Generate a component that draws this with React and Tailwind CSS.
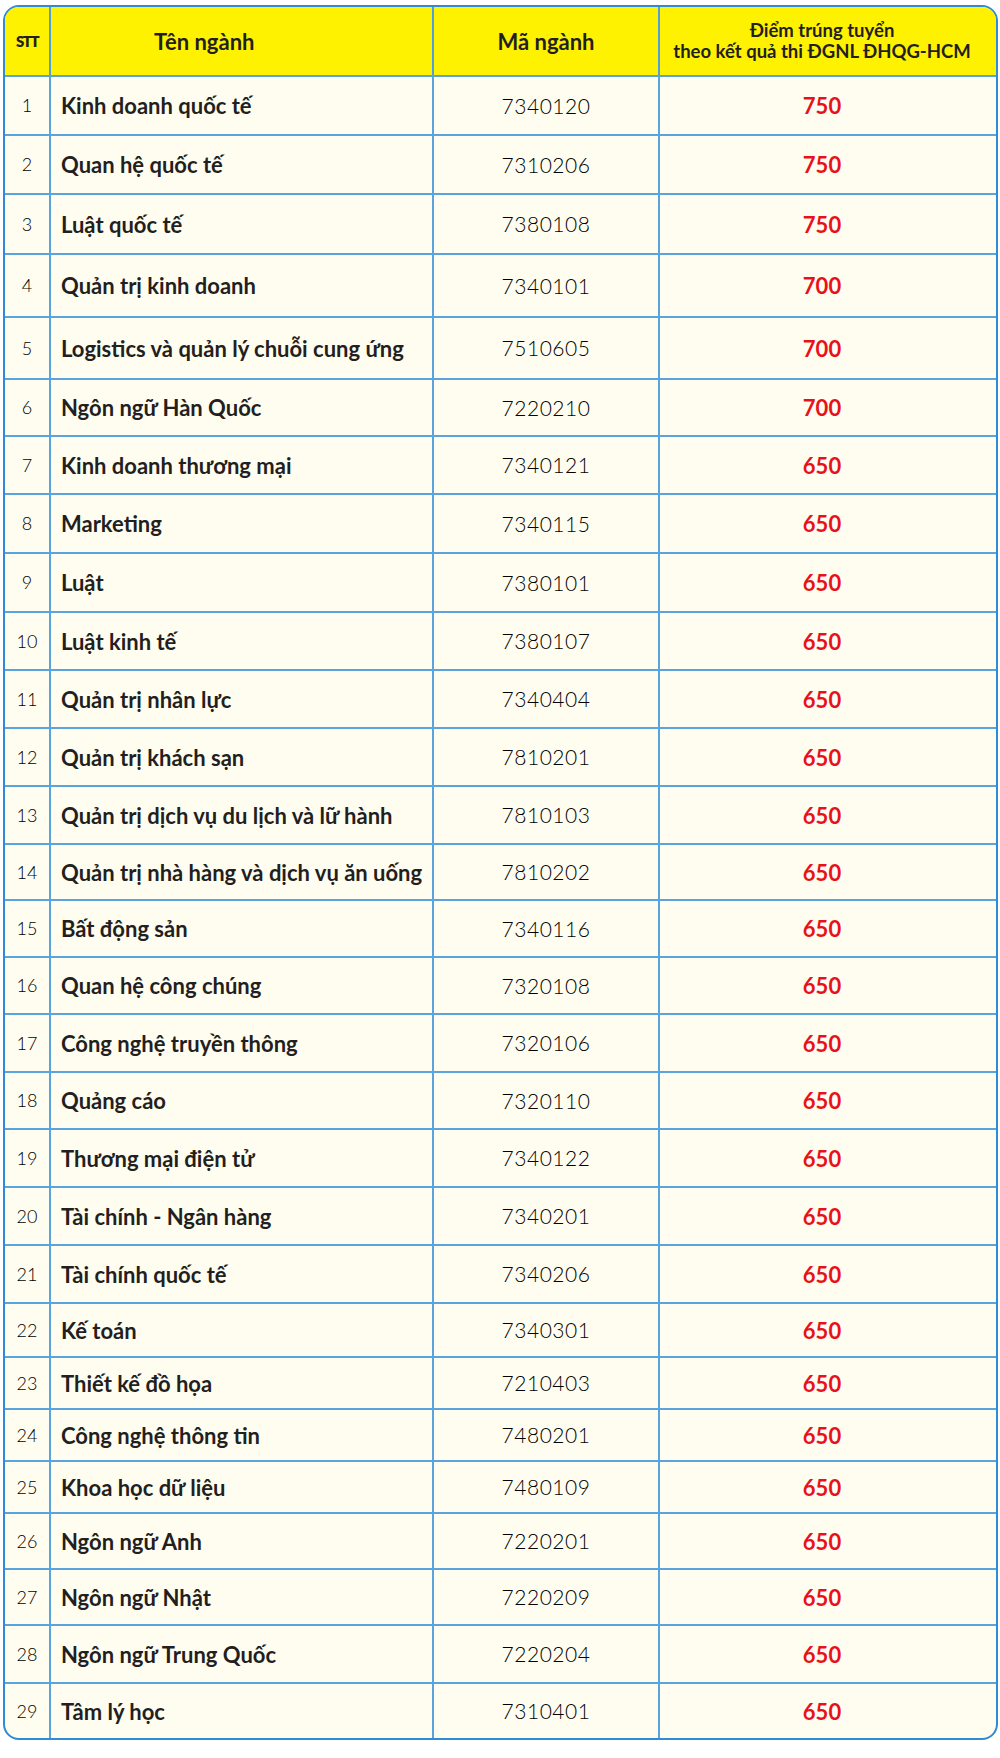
import React from "react";

const rows = [
  [1, "Kinh doanh quốc tế", "7340120", "750", "h-[59px]"],
  [2, "Quan hệ quốc tế", "7310206", "750", "h-[59px]"],
  [3, "Luật quốc tế", "7380108", "750", "h-[60px]"],
  [4, "Quản trị kinh doanh", "7340101", "700", "h-[63px]"],
  [5, "Logistics và quản lý chuỗi cung ứng", "7510605", "700", "h-[62px]"],
  [6, "Ngôn ngữ Hàn Quốc", "7220210", "700", "h-[57px]"],
  [7, "Kinh doanh thương mại", "7340121", "650", "h-[58px]"],
  [8, "Marketing", "7340115", "650", "h-[59px]"],
  [9, "Luật", "7380101", "650", "h-[59px]"],
  [10, "Luật kinh tế", "7380107", "650", "h-[58px]"],
  [11, "Quản trị nhân lực", "7340404", "650", "h-[58px]"],
  [12, "Quản trị khách sạn", "7810201", "650", "h-[58px]"],
  [13, "Quản trị dịch vụ du lịch và lữ hành", "7810103", "650", "h-[58px]"],
  [14, "Quản trị nhà hàng và dịch vụ ăn uống", "7810202", "650", "h-[56px]"],
  [15, "Bất động sản", "7340116", "650", "h-[57px]"],
  [16, "Quan hệ công chúng", "7320108", "650", "h-[57px]"],
  [17, "Công nghệ truyền thông", "7320106", "650", "h-[58px]"],
  [18, "Quảng cáo", "7320110", "650", "h-[57px]"],
  [19, "Thương mại điện tử", "7340122", "650", "h-[58px]"],
  [20, "Tài chính - Ngân hàng", "7340201", "650", "h-[58px]"],
  [21, "Tài chính quốc tế", "7340206", "650", "h-[58px]"],
  [22, "Kế toán", "7340301", "650", "h-[54px]"],
  [23, "Thiết kế đồ họa", "7210403", "650", "h-[52px]"],
  [24, "Công nghệ thông tin", "7480201", "650", "h-[52px]"],
  [25, "Khoa học dữ liệu", "7480109", "650", "h-[52px]"],
  [26, "Ngôn ngữ Anh", "7220201", "650", "h-[56px]"],
  [27, "Ngôn ngữ Nhật", "7220209", "650", "h-[56px]"],
  [28, "Ngôn ngữ Trung Quốc", "7220204", "650", "h-[58px]"],
  [29, "Tâm lý học", "7310401", "650", "h-[56px]"],
];

const grid = "grid grid-cols-[44px_383px_226px_1fr]";

export default function App() {
  return (
    <div className="bg-white w-[1000px] h-[1758px] pt-[5px] pl-[3px] font-['Lato','Noto_Sans',sans-serif] text-[#231f20]">
      <div className="w-[995px] rounded-[16px] border-2 border-[#2f8bd4] overflow-hidden bg-[#fffdf0]">
        <div className={`${grid} h-[68px] bg-[#fff200]`}>
          <div className="flex items-center justify-center text-[15px] font-extrabold tracking-[-1.5px]">STT</div>
          <div className="flex items-center border-l-2 border-[#4f9fdc] pl-[103px] text-[22px] font-bold">Tên ngành</div>
          <div className="flex items-center justify-center border-l-2 border-[#4f9fdc] text-[22px] font-bold">Mã ngành</div>
          <div className="flex flex-col items-center justify-center border-l-2 border-[#4f9fdc] pr-[12px] text-[18.5px] font-bold leading-[21px]">
            <span>Điểm trúng tuyển</span>
            <span>theo kết quả thi ĐGNL ĐHQG-HCM</span>
          </div>
        </div>
        <div className="flex flex-col">
          {rows.map(([n, name, code, score, h]) => (
            <div key={n} className={`${grid} ${h} border-t-2 border-[#5aa4dd]`}>
              <div className="flex items-center justify-center text-[18px] font-light text-black">{n}</div>
              <div className="flex items-center border-l-2 border-[#5aa4dd] pl-[10px] text-[22px] font-bold">{name}</div>
              <div className="flex items-center justify-center border-l-2 border-[#5aa4dd] text-[21px] font-light text-black tracking-[0.5px]">{code}</div>
              <div className="flex items-center justify-center border-l-2 border-[#5aa4dd] pr-[12px] text-[22px] font-bold text-[#e8111b]">{score}</div>
            </div>
          ))}
        </div>
      </div>
    </div>
  );
}
